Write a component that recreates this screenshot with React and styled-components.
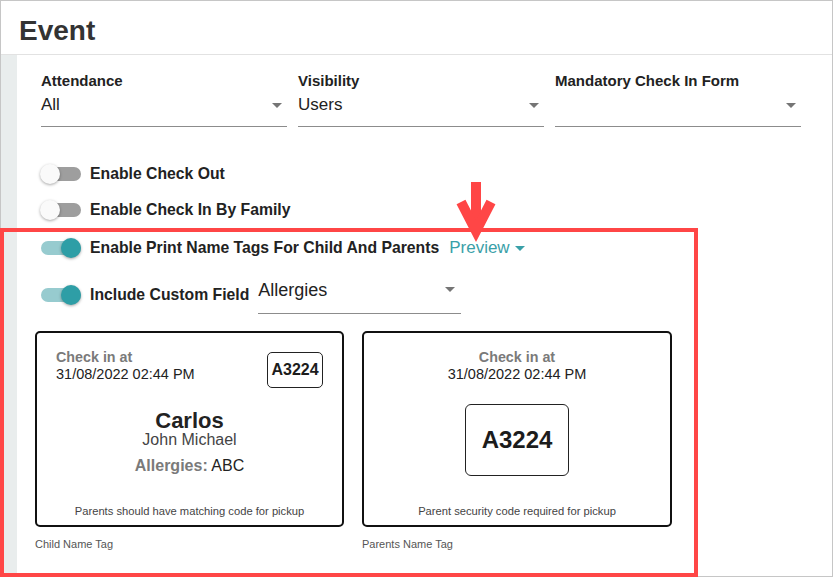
import React from "react";
import styled, { createGlobalStyle } from "styled-components";

const GlobalStyle = createGlobalStyle`
  body {
    margin: 0;
    background: #fff;
    font-family: "Liberation Sans", Arial, sans-serif;
  }
`;

const Frame = styled.div`
  position: relative;
  width: 833px;
  height: 577px;
  box-sizing: border-box;
  border: 1px solid #c6c6c6;
  display: flex;
  flex-direction: column;
  color: #222;
`;

const Header = styled.div`
  height: 54px;
  box-sizing: border-box;
  border-bottom: 1px solid #e2e2e2;
  padding: 14px 0 0 18px;
`;

const Title = styled.h1`
  margin: 0;
  font-size: 28px;
  line-height: 31px;
  font-weight: 700;
  color: #333;
`;

const Body = styled.div`
  flex: 1;
  display: flex;
`;

const Rail = styled.div`
  width: 16px;
  background: #e9eded;
`;

const Content = styled.div`
  flex: 1;
  padding: 18px 31px 0 24px;
`;

const FieldGrid = styled.div`
  display: grid;
  grid-template-columns: repeat(3, 246px);
  column-gap: 11px;
`;

const FieldLabel = styled.div`
  font-size: 15px;
  line-height: 16px;
  font-weight: 700;
  color: #222;
`;

const SelectBox = styled.div`
  display: flex;
  align-items: center;
  width: ${(p) => p.$width || "auto"};
  padding: ${(p) => (p.$compact ? "3px 0 13px" : "6px 0 11px")};
  border-bottom: 1px solid #8c8c8c;
`;

const SelectValue = styled.span`
  flex: 1;
  font-size: ${(p) => (p.$big ? "18px" : "17px")};
  line-height: 20px;
  color: #222;
  min-height: 20px;
`;

const Caret = styled.span`
  width: 0;
  height: 0;
  border-left: 5px solid transparent;
  border-right: 5px solid transparent;
  border-top: 5px solid ${(p) => p.$color || "#757575"};
  margin-right: ${(p) => p.$gap || "5px"};
`;

const ToggleList = styled.div`
  margin-top: 29px;
  display: flex;
  flex-direction: column;
`;

const ToggleRow = styled.div`
  display: flex;
  align-items: center;
  height: 36px;
  margin-top: ${(p) => p.$gap || "0px"};
`;

const SwitchTrack = styled.span`
  position: relative;
  width: 40px;
  height: 14px;
  border-radius: 7px;
  margin-right: 9px;
  flex-shrink: 0;
  background: ${(p) => (p.$on ? "#97cbcf" : "#9e9e9e")};
`;

const SwitchThumb = styled.span`
  position: absolute;
  top: -3px;
  left: ${(p) => (p.$on ? "20px" : "-1px")};
  width: 20px;
  height: 20px;
  border-radius: 50%;
  background: ${(p) => (p.$on ? "#2e9ea6" : "#fafafa")};
  box-shadow: 0 1px 3px rgba(0, 0, 0, 0.35);
`;

const ToggleLabel = styled.span`
  font-size: 15.75px;
  font-weight: 700;
  color: #222;
`;

const PreviewLink = styled.span`
  display: inline-flex;
  align-items: center;
  gap: 5px;
  margin-left: 10px;
  font-size: 17px;
  color: #3aa0a8;
`;

const InlineSelect = styled.div`
  margin-left: 9px;
`;

const TagGrid = styled.div`
  display: grid;
  grid-template-columns: 309px 310px;
  column-gap: 18px;
  margin: 18px 0 0 -6px;
`;

const TagColumn = styled.div`
  display: flex;
  flex-direction: column;
`;

const TagCard = styled.div`
  height: 196px;
  box-sizing: border-box;
  border: 2px solid #111;
  border-radius: 5px;
  padding: 16px 19px 7px;
  display: flex;
  flex-direction: column;
  align-items: ${(p) => (p.$centered ? "center" : "stretch")};
  text-align: ${(p) => (p.$centered ? "center" : "left")};
`;

const TagTop = styled.div`
  display: flex;
  justify-content: space-between;
  align-items: flex-start;
`;

const CheckInTitle = styled.div`
  font-size: 14.3px;
  line-height: 16px;
  font-weight: 700;
  color: #7a7a7a;
`;

const CheckInDate = styled.div`
  font-size: 14.5px;
  line-height: 18px;
  color: #222;
`;

const CodeBox = styled.div`
  box-sizing: border-box;
  width: ${(p) => (p.$large ? "104px" : "56px")};
  height: ${(p) => (p.$large ? "72px" : "36px")};
  margin-top: ${(p) => (p.$large ? "21px" : "3px")};
  border: 1px solid #222;
  border-radius: ${(p) => (p.$large ? "6px" : "5px")};
  display: flex;
  align-items: center;
  justify-content: center;
  font-size: ${(p) => (p.$large ? "24px" : "16px")};
  font-weight: 700;
  color: #1c1c1c;
`;

const NameBlock = styled.div`
  margin-top: 22px;
  text-align: center;
`;

const FirstName = styled.div`
  font-size: 22px;
  line-height: 22px;
  font-weight: 700;
  color: #222;
`;

const OtherNames = styled.div`
  font-size: 16px;
  line-height: 16px;
  color: #444;
`;

const AllergyLine = styled.div`
  margin-top: 9px;
  font-size: 16px;
  line-height: 18px;
  color: #222;
`;

const AllergyKey = styled.span`
  font-weight: 700;
  color: #7a7a7a;
`;

const TagFooter = styled.div`
  margin-top: auto;
  font-size: 11.2px;
  line-height: 13px;
  color: #444;
  text-align: center;
`;

const TagCaption = styled.div`
  margin-top: 11px;
  font-size: 11px;
  line-height: 13px;
  color: #555;
`;

const Highlight = styled.div`
  position: absolute;
  left: -1px;
  top: 227px;
  width: 698px;
  height: 349px;
  box-sizing: border-box;
  border: 4px solid #ff4646;
  pointer-events: none;
`;

const ArrowMark = styled.svg`
  position: absolute;
  left: 451px;
  top: 177px;
`;

function Switch({ on }) {
  return (
    <SwitchTrack $on={on}>
      <SwitchThumb $on={on} />
    </SwitchTrack>
  );
}

function SelectField({ label, value }) {
  return (
    <div>
      <FieldLabel>{label}</FieldLabel>
      <SelectBox>
        <SelectValue>{value}</SelectValue>
        <Caret />
      </SelectBox>
    </div>
  );
}

export default function App() {
  return (
    <>
      <GlobalStyle />
      <Frame>
        <Header>
          <Title>Event</Title>
        </Header>
        <Body>
          <Rail />
          <Content>
            <FieldGrid>
              <SelectField label="Attendance" value="All" />
              <SelectField label="Visibility" value="Users" />
              <SelectField label="Mandatory Check In Form" value="" />
            </FieldGrid>

            <ToggleList>
              <ToggleRow>
                <Switch on={false} />
                <ToggleLabel>Enable Check Out</ToggleLabel>
              </ToggleRow>
              <ToggleRow>
                <Switch on={false} />
                <ToggleLabel>Enable Check In By Family</ToggleLabel>
              </ToggleRow>
              <ToggleRow $gap="2px">
                <Switch on />
                <ToggleLabel>Enable Print Name Tags For Child And Parents</ToggleLabel>
                <PreviewLink>
                  Preview
                  <Caret $color="#3aa0a8" $gap="0px" />
                </PreviewLink>
              </ToggleRow>
              <ToggleRow $gap="11px">
                <Switch on />
                <ToggleLabel>Include Custom Field</ToggleLabel>
                <InlineSelect>
                  <SelectBox $width="203px" $compact>
                    <SelectValue $big>Allergies</SelectValue>
                    <Caret $gap="6px" />
                  </SelectBox>
                </InlineSelect>
              </ToggleRow>
            </ToggleList>

            <TagGrid>
              <TagColumn>
                <TagCard>
                  <TagTop>
                    <div>
                      <CheckInTitle>Check in at</CheckInTitle>
                      <CheckInDate>31/08/2022 02:44 PM</CheckInDate>
                    </div>
                    <CodeBox>A3224</CodeBox>
                  </TagTop>
                  <NameBlock>
                    <FirstName>Carlos</FirstName>
                    <OtherNames>John Michael</OtherNames>
                    <AllergyLine>
                      <AllergyKey>Allergies:</AllergyKey> ABC
                    </AllergyLine>
                  </NameBlock>
                  <TagFooter>Parents should have matching code for pickup</TagFooter>
                </TagCard>
                <TagCaption>Child Name Tag</TagCaption>
              </TagColumn>
              <TagColumn>
                <TagCard $centered>
                  <CheckInTitle>Check in at</CheckInTitle>
                  <CheckInDate>31/08/2022 02:44 PM</CheckInDate>
                  <CodeBox $large>A3224</CodeBox>
                  <TagFooter>Parent security code required for pickup</TagFooter>
                </TagCard>
                <TagCaption>Parents Name Tag</TagCaption>
              </TagColumn>
            </TagGrid>
          </Content>
        </Body>
        <Highlight />
        <ArrowMark width="48" height="68" viewBox="0 0 48 68">
          <rect x="19" y="4" width="10" height="46" fill="#ff4646" />
          <polyline
            points="9,24 24,53 39,24"
            fill="none"
            stroke="#ff4646"
            strokeWidth="10"
            strokeLinejoin="miter"
          />
        </ArrowMark>
      </Frame>
    </>
  );
}
